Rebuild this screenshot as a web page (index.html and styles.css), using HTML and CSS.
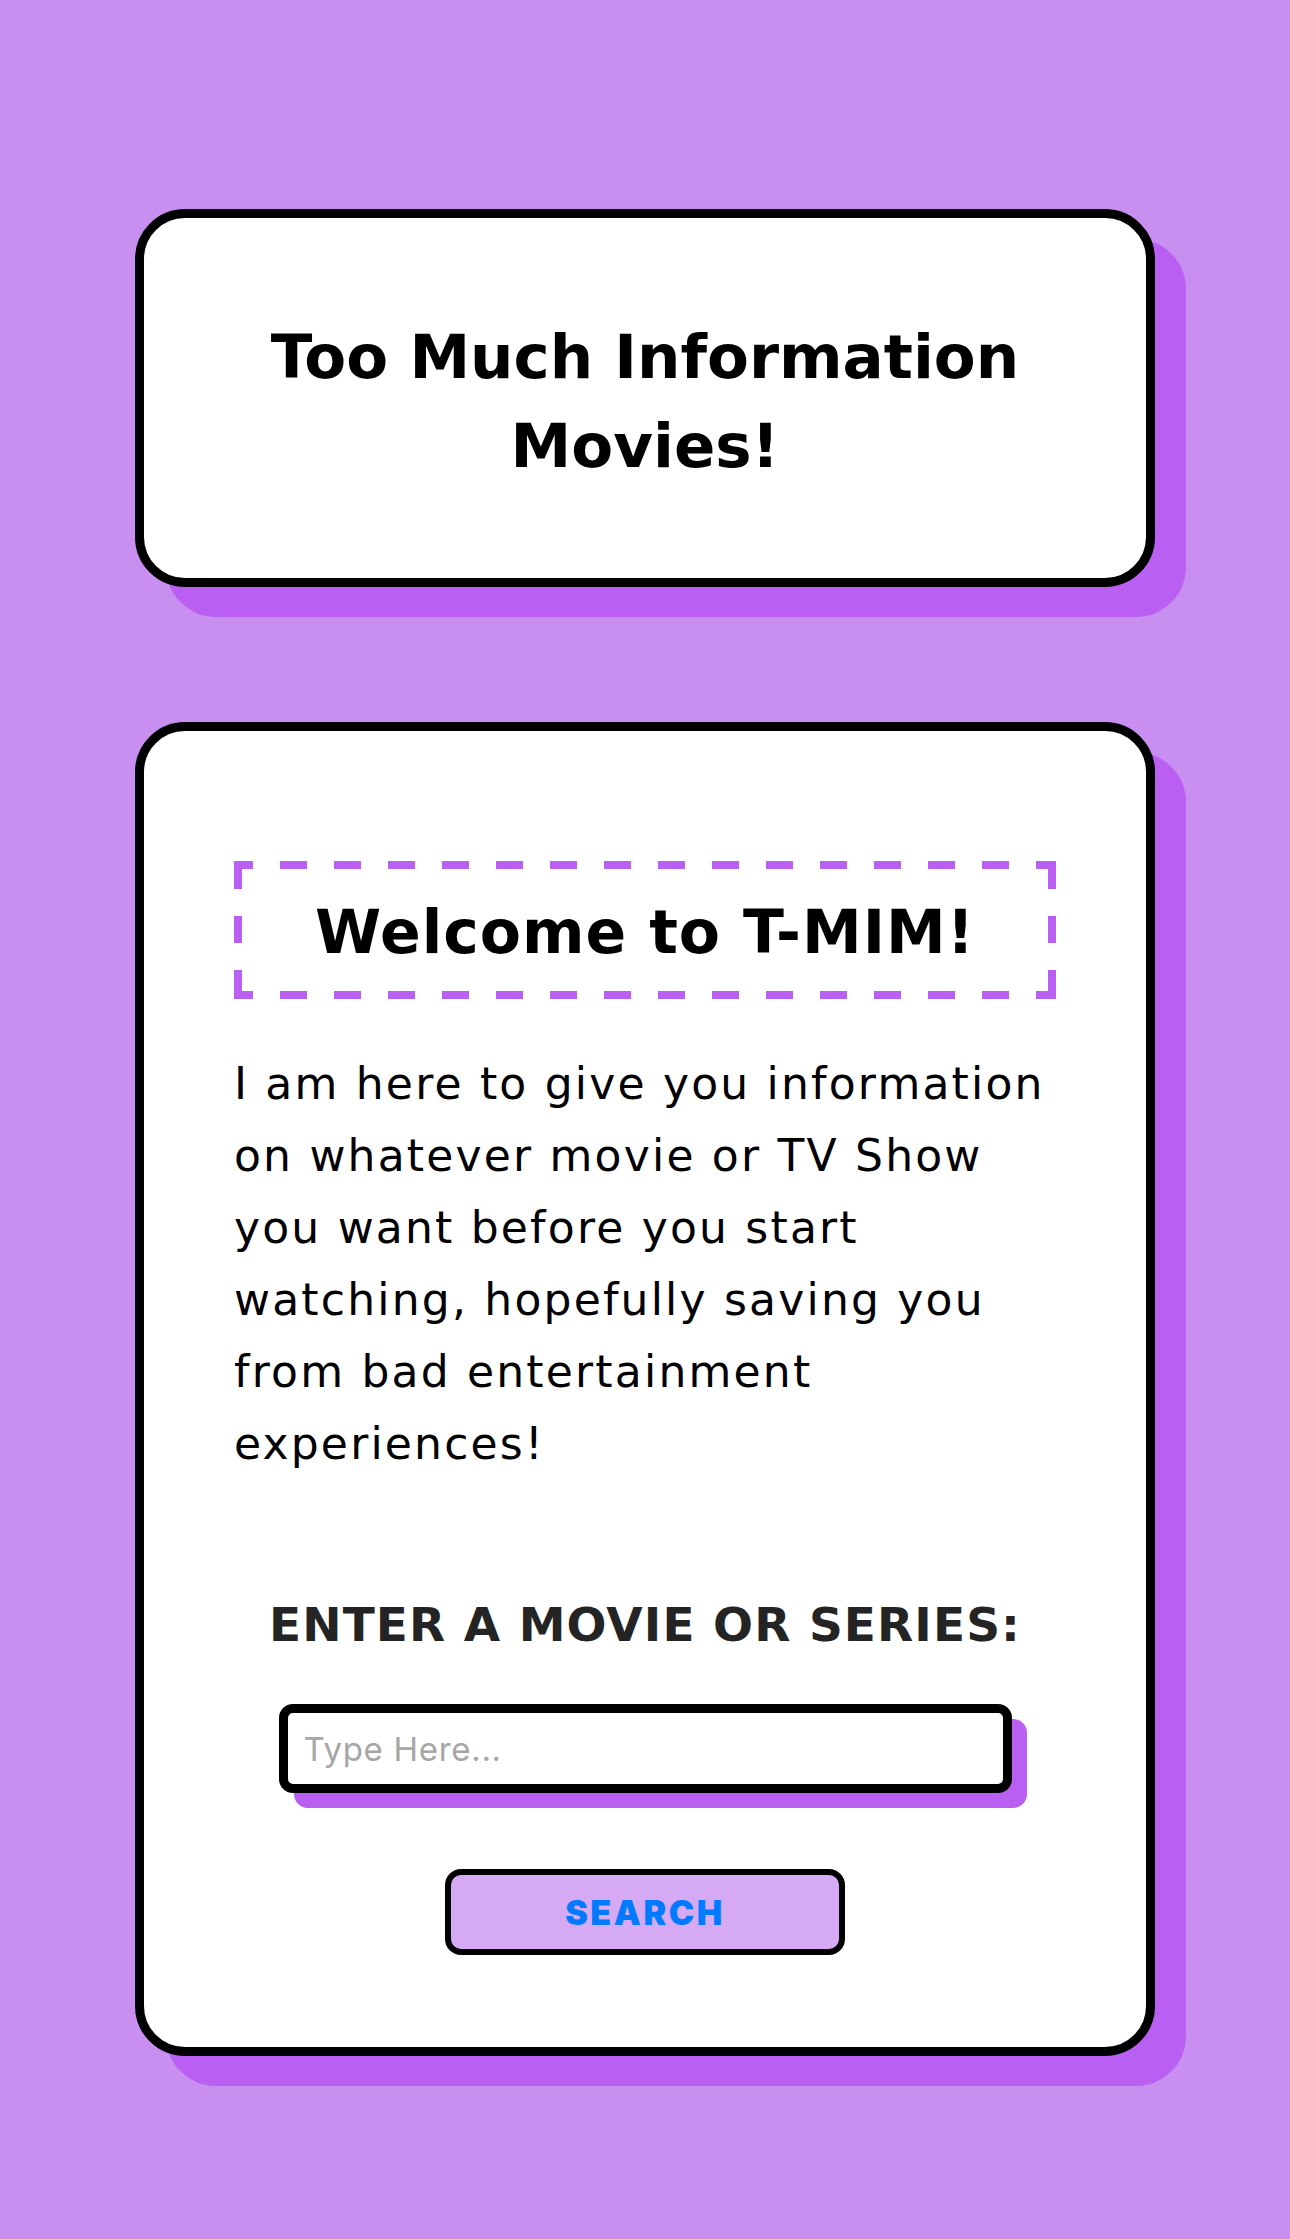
FILE: index.html
```html
<!DOCTYPE html>
<html lang="en">
<head>
<meta charset="utf-8">
<title>T-MIM</title>
<link rel="stylesheet" href="styles.css">
</head>
<body>
<main class="page">
  <header class="card header-card">
    <h1 class="site-title">Too Much Information Movies!</h1>
  </header>
  <section class="card main-card">
    <h2 class="welcome">Welcome to T-MIM!</h2>
    <p class="intro">I am here to give you information on whatever movie or TV Show you want before you start watching, hopefully saving you from bad entertainment experiences!</p>
    <form class="search-form">
      <label class="search-label" for="q">ENTER A MOVIE OR SERIES:</label>
      <input class="search-input" id="q" type="text" placeholder="Type Here...">
      <button class="search-btn" type="button">SEARCH</button>
    </form>
  </section>
</main>
</body>
</html>
```

FILE: styles.css
```css
html, body {
  margin: 0;
  padding: 0;
}
body {
  background: #c88ff0;
  font-family: "DejaVu Sans", Verdana, sans-serif;
  min-height: 2239px;
}
.page {
  display: flex;
  flex-direction: column;
  align-items: center;
  padding-top: 209px;
  gap: 135px;
}
.card {
  box-sizing: border-box;
  width: 1020px;
  background: #ffffff;
  border: 9px solid #000000;
  border-radius: 50px;
  box-shadow: 31px 30px 0 #b960f2;
}
.header-card {
  height: 378px;
  display: flex;
  align-items: center;
  justify-content: center;
  padding: 6px 80px 0;
}
.site-title {
  margin: 0;
  font-size: 61px;
  line-height: 89px;
  font-weight: bold;
  text-align: center;
  color: #000;
}
.main-card {
  padding: 130px 90px 92px;
  display: flex;
  flex-direction: column;
}
.welcome {
  --dash: #b960f2;
  box-sizing: border-box;
  margin: 0;
  height: 138px;
  display: flex;
  align-items: center;
  justify-content: center;
  font-size: 60px;
  font-weight: bold;
  letter-spacing: 1px;
  color: #000;
  padding-top: 4px;
  background-image:
    repeating-linear-gradient(90deg, var(--dash) 0 19px, transparent 19px 46px, var(--dash) 46px 54px),
    repeating-linear-gradient(90deg, var(--dash) 0 19px, transparent 19px 46px, var(--dash) 46px 54px),
    linear-gradient(180deg, var(--dash) 0 28px, transparent 28px 55px, var(--dash) 55px 82px, transparent 82px 109px, var(--dash) 109px),
    linear-gradient(180deg, var(--dash) 0 28px, transparent 28px 55px, var(--dash) 55px 82px, transparent 82px 109px, var(--dash) 109px);
  background-size: 100% 8px, 100% 8px, 8px 100%, 8px 100%;
  background-position: left top, left bottom, left top, right top;
  background-repeat: no-repeat;
}
.intro {
  margin: 49px 0 0;
  font-size: 44px;
  line-height: 72px;
  letter-spacing: 2.2px;
  color: #000;
}
.search-form {
  display: flex;
  flex-direction: column;
  align-items: center;
  margin-top: 117px;
}
.search-label {
  font-size: 47px;
  line-height: 55px;
  font-weight: bold;
  color: #242424;
  letter-spacing: 1.1px;
}
.search-input {
  box-sizing: border-box;
  margin-top: 52px;
  width: 733px;
  height: 89px;
  border: 9px solid #000;
  border-radius: 14px;
  padding: 0 16px;
  font-family: Inter, "Noto Sans", sans-serif;
  font-size: 33px;
  letter-spacing: 0.7px;
  background: #fff;
  box-shadow: 15px 15px 0 #b960f2;
  outline: none;
}
.search-input::placeholder {
  color: #a6a6a6;
}
.search-btn {
  box-sizing: border-box;
  margin-top: 76px;
  width: 400px;
  height: 86px;
  border: 6px solid #000;
  border-radius: 16px;
  background: #d6a9f4;
  color: #007bff;
  font-family: Inter, "Noto Sans", sans-serif;
  font-weight: 900;
  font-size: 34px;
  letter-spacing: 2.6px;
  padding: 0;
}
```
